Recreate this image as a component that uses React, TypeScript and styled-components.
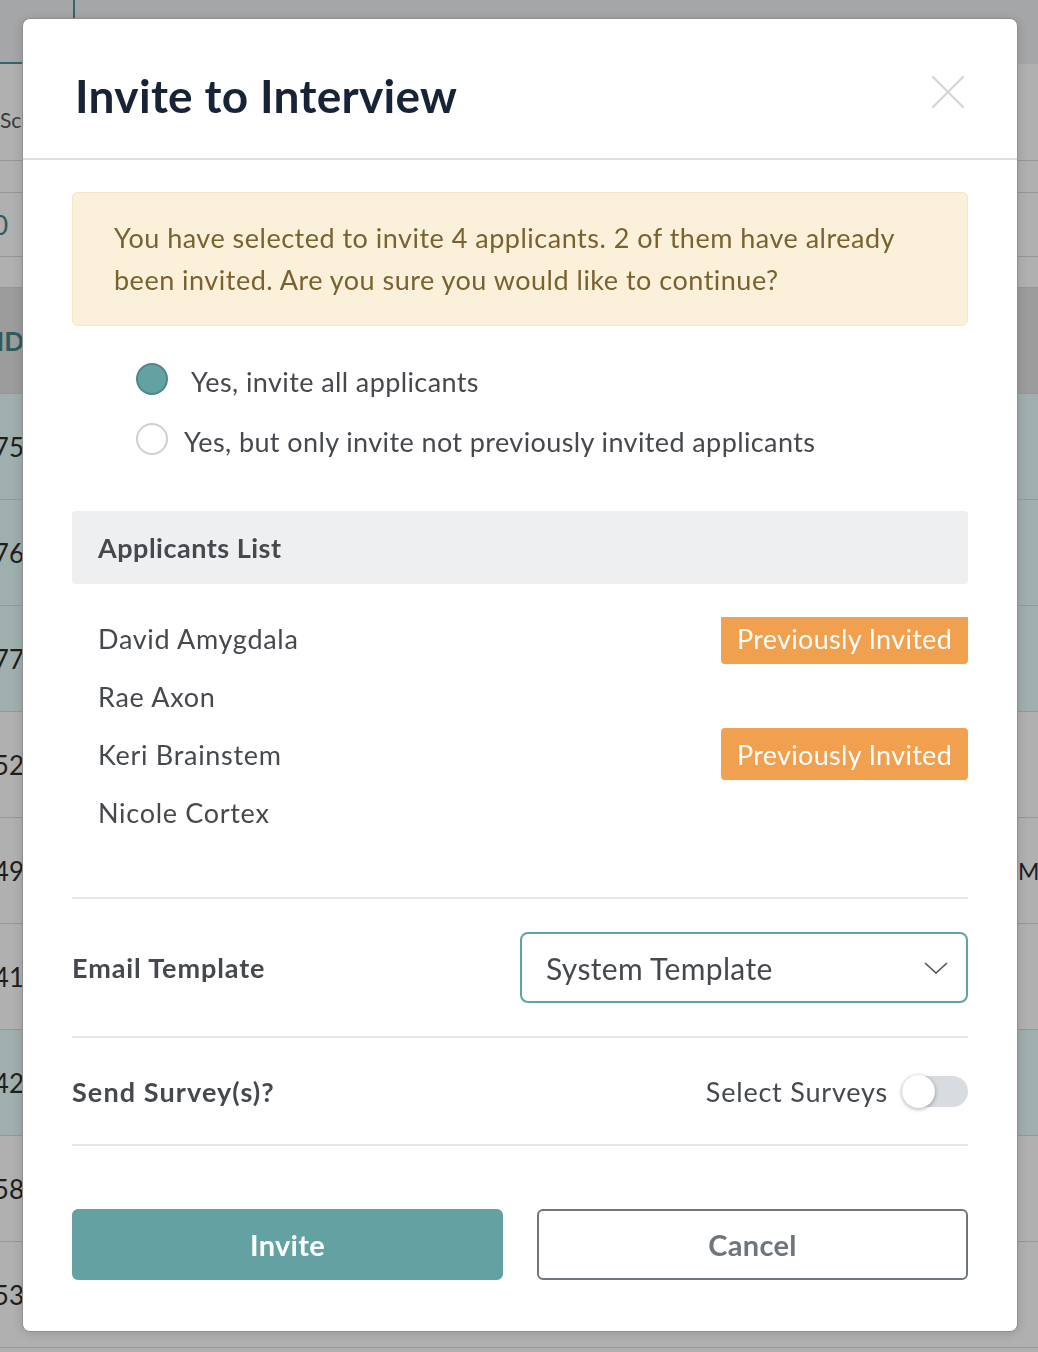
import React, { useState } from "react";
import styled, { createGlobalStyle } from "styled-components";

const teal = "#63a1a3";
const textGray = "#45494e";

const GlobalStyle = createGlobalStyle`
  html, body {
    margin: 0;
    padding: 0;
  }
  body {
    font-family: Lato, "Open Sans", sans-serif;
    background: #fff;
  }
  * {
    box-sizing: border-box;
  }
`;

/* ---------- page behind the dialog ---------- */

const Page = styled.div`
  width: 1038px;
  height: 1352px;
  overflow: hidden;
  background: #fcfcfc;
  color: #2c2c2c;
  font-size: 26px;
`;

const TopBar = styled.div`
  height: 64px;
  display: flex;
  background: #edeef1;
`;

const Tab = styled.div`
  width: 75px;
  border-right: 2px solid #4f9193;
  border-bottom: 2px solid #4f9193;
`;

const Band = styled.div<{ $h: number; $bg?: string }>`
  height: ${(p) => p.$h}px;
  display: flex;
  align-items: center;
  justify-content: space-between;
  background: ${(p) => p.$bg || "transparent"};
  border-bottom: 1px solid #d9d9d9;
`;

const ToolbarText = styled.span`
  padding-top: 14px;
  font-size: 21px;
  color: #555;
  white-space: nowrap;
`;

const EdgeText = styled.span<{ $w?: number; $color?: string; $bold?: boolean }>`
  width: ${(p) => p.$w || 24}px;
  direction: rtl;
  white-space: nowrap;
  color: ${(p) => p.$color || "#2c2c2c"};
  font-weight: ${(p) => (p.$bold ? 700 : 400)};
`;

const RightText = styled.span`
  width: 20px;
  font-size: 23px;
  white-space: nowrap;
  overflow: hidden;
`;

/* ---------- dialog ---------- */

const Overlay = styled.div`
  position: fixed;
  inset: 0;
  background: rgba(0, 0, 0, 0.3);
  display: flex;
  align-items: flex-start;
  padding: 18px 0 0 22px;
`;

const Modal = styled.div`
  width: 996px;
  flex: none;
  background: #fff;
  border: 1px solid #8f8f8f;
  border-radius: 8px;
  box-shadow: 0 2px 12px rgba(0, 0, 0, 0.15);
  letter-spacing: 0.5px;
`;

const Header = styled.header`
  height: 141px;
  display: flex;
  justify-content: space-between;
  align-items: flex-start;
  padding: 49px 53px 0 52px;
  border-bottom: 2px solid #dcdfe3;
`;

const Title = styled.h1`
  margin: 0;
  font-size: 46px;
  line-height: 55px;
  font-weight: 700;
  letter-spacing: 0.3px;
  color: #172336;
`;

const CloseButton = styled.button`
  margin-top: 8px;
  width: 32px;
  height: 32px;
  padding: 0;
  border: 0;
  background: none;
  cursor: pointer;
`;

const Body = styled.div`
  padding: 32px 49px 51px;
`;

const Alert = styled.div`
  background: #fbf1da;
  border: 1px solid #f6e6c2;
  border-radius: 6px;
  padding: 24px 41px;
  font-size: 27px;
  line-height: 42px;
  color: #7a6230;
`;

const RadioGroup = styled.div`
  margin-top: 37px;
  padding-left: 64px;
  display: flex;
  flex-direction: column;
  gap: 28px;
`;

const RadioRow = styled.label<{ $gap: number }>`
  display: flex;
  align-items: center;
  gap: ${(p) => p.$gap}px;
  height: 32px;
  cursor: pointer;
  font-size: 27px;
  color: ${textGray};
`;

const RadioDot = styled.span<{ $checked: boolean }>`
  width: 32px;
  height: 32px;
  flex: none;
  border-radius: 50%;
  border: 2px solid ${(p) => (p.$checked ? "#4d8789" : "#ccd0d5")};
  background: ${(p) => (p.$checked ? teal : "#fff")};
`;

const RadioText = styled.span`
  padding-top: 5px;
  letter-spacing: 0.4px;
`;

const SectionHead = styled.div`
  margin-top: 56px;
  height: 73px;
  display: flex;
  align-items: center;
  padding-left: 26px;
  background: #eeeff1;
  border-radius: 4px;
  font-size: 27px;
  font-weight: 700;
  color: ${textGray};
`;

const ListViewport = styled.div`
  margin-top: 33px;
  height: 280px;
  overflow: hidden;
`;

const ListInner = styled.ul`
  list-style: none;
  margin: -8px 0 0;
  padding: 0;
`;

const ApplicantRow = styled.li`
  height: 58px;
  display: flex;
  align-items: center;
  justify-content: space-between;
  padding-left: 26px;
  font-size: 27px;
  letter-spacing: 0.7px;
  color: ${textGray};
`;

const Badge = styled.span`
  width: 247px;
  height: 52px;
  display: flex;
  align-items: center;
  justify-content: center;
  background: #f0a04f;
  border-radius: 4px;
  color: #fff;
  font-size: 27px;
  letter-spacing: 0.3px;
`;

const FormRow = styled.div<{ $h: number }>`
  height: ${(p) => p.$h}px;
  display: flex;
  align-items: center;
  justify-content: space-between;
  border-top: 2px solid #e6e7e9;
`;

const FieldLabel = styled.span<{ $spacing: number }>`
  font-size: 27px;
  font-weight: 700;
  letter-spacing: ${(p) => p.$spacing}px;
  color: ${textGray};
`;

const Select = styled.button`
  width: 448px;
  height: 71px;
  display: flex;
  align-items: center;
  justify-content: space-between;
  padding: 0 17px 0 24px;
  background: #fff;
  border: 2px solid ${teal};
  border-radius: 8px;
  font-family: inherit;
  font-size: 30px;
  letter-spacing: 0.35px;
  color: ${textGray};
  cursor: pointer;
`;

const SwitchWrap = styled.div`
  display: flex;
  align-items: center;
  gap: 14px;
  font-size: 27px;
  letter-spacing: 0.8px;
  color: ${textGray};
`;

const SwitchTrack = styled.button<{ $on: boolean }>`
  position: relative;
  width: 66px;
  height: 31px;
  padding: 0;
  border: 0;
  border-radius: 16px;
  background: ${(p) => (p.$on ? teal : "#d8dbdf")};
  cursor: pointer;
`;

const SwitchKnob = styled.span<{ $on: boolean }>`
  position: absolute;
  top: -1px;
  left: ${(p) => (p.$on ? "33px" : "0")};
  width: 33px;
  height: 33px;
  border-radius: 50%;
  background: #fff;
  box-shadow: 0 1px 4px rgba(0, 0, 0, 0.35);
`;

const ActionsWrap = styled.div`
  border-top: 2px solid #e6e7e9;
  padding-top: 63px;
`;

const ButtonRow = styled.div`
  display: grid;
  grid-template-columns: 1fr 1fr;
  gap: 34px;
`;

const Button = styled.button<{ $primary?: boolean }>`
  height: 71px;
  border-radius: 6px;
  font-family: inherit;
  font-size: 29px;
  font-weight: 700;
  letter-spacing: 0.3px;
  cursor: pointer;
  border: 2px solid ${(p) => (p.$primary ? teal : "#6f757c")};
  background: ${(p) => (p.$primary ? teal : "#fff")};
  color: ${(p) => (p.$primary ? "#fff" : "#6f757c")};
`;

const applicants = [
  { name: "David Amygdala", invited: true },
  { name: "Rae Axon", invited: false },
  { name: "Keri Brainstem", invited: true },
  { name: "Nicole Cortex", invited: false },
];

const bgRows = [
  { id: "1775", teal: true },
  { id: "1776", teal: true },
  { id: "1777", teal: true },
  { id: "1752", teal: false },
  { id: "1749", teal: false, right: "Me" },
  { id: "1741", teal: false },
  { id: "1742", teal: true },
  { id: "1758", teal: false },
  { id: "1753", teal: false },
];

const App = () => {
  const [choice, setChoice] = useState("all");
  const [surveys, setSurveys] = useState(false);

  return (
    <>
      <GlobalStyle />
      <Page aria-hidden="true">
        <TopBar>
          <Tab />
        </TopBar>
        <Band $h={97}>
          <ToolbarText>Schedule</ToolbarText>
        </Band>
        <Band $h={32} />
        <Band $h={64}>
          <EdgeText $w={8} $color="#3f8587">
            10
          </EdgeText>
        </Band>
        <Band $h={31} />
        <Band $h={106} $bg="#e0e0e1">
          <EdgeText $w={24} $color="#3f8587" $bold>
            ID
          </EdgeText>
        </Band>
        {bgRows.map((r) => (
          <Band key={r.id} $h={106} $bg={r.teal ? "#e4fbfa" : "transparent"}>
            <EdgeText>{r.id}</EdgeText>
            {r.right && <RightText>{r.right}</RightText>}
          </Band>
        ))}
      </Page>

      <Overlay>
        <Modal role="dialog" aria-labelledby="invite-title">
          <Header>
            <Title id="invite-title">Invite to Interview</Title>
            <CloseButton aria-label="Close">
              <svg width="32" height="32" viewBox="0 0 32 32">
                <path
                  d="M1 1L31 31M31 1L1 31"
                  stroke="#d6d6d6"
                  strokeWidth="2.2"
                  strokeLinecap="round"
                />
              </svg>
            </CloseButton>
          </Header>

          <Body>
            <Alert>
              You have selected to invite 4 applicants. 2 of them have already
              been invited. Are you sure you would like to continue?
            </Alert>

            <RadioGroup>
              <RadioRow $gap={23} onClick={() => setChoice("all")}>
                <RadioDot $checked={choice === "all"} />
                <RadioText>Yes, invite all applicants</RadioText>
              </RadioRow>
              <RadioRow $gap={16} onClick={() => setChoice("new")}>
                <RadioDot $checked={choice === "new"} />
                <RadioText>
                  Yes, but only invite not previously invited applicants
                </RadioText>
              </RadioRow>
            </RadioGroup>

            <SectionHead>Applicants List</SectionHead>
            <ListViewport>
              <ListInner>
                {applicants.map((a) => (
                  <ApplicantRow key={a.name}>
                    {a.name}
                    {a.invited && <Badge>Previously Invited</Badge>}
                  </ApplicantRow>
                ))}
              </ListInner>
            </ListViewport>

            <FormRow $h={139}>
              <FieldLabel $spacing={0.9}>Email Template</FieldLabel>
              <Select>
                System Template
                <svg width="26" height="16" viewBox="0 0 26 16">
                  <path
                    d="M2 3L13 13L24 3"
                    fill="none"
                    stroke="#4a4d52"
                    strokeWidth="1.6"
                  />
                </svg>
              </Select>
            </FormRow>
            <FormRow $h={108}>
              <FieldLabel $spacing={1.1}>Send Survey(s)?</FieldLabel>
              <SwitchWrap>
                Select Surveys
                <SwitchTrack
                  $on={surveys}
                  aria-pressed={surveys}
                  onClick={() => setSurveys(!surveys)}
                >
                  <SwitchKnob $on={surveys} />
                </SwitchTrack>
              </SwitchWrap>
            </FormRow>

            <ActionsWrap>
              <ButtonRow>
                <Button $primary>Invite</Button>
                <Button>Cancel</Button>
              </ButtonRow>
            </ActionsWrap>
          </Body>
        </Modal>
      </Overlay>
    </>
  );
};

export default App;
